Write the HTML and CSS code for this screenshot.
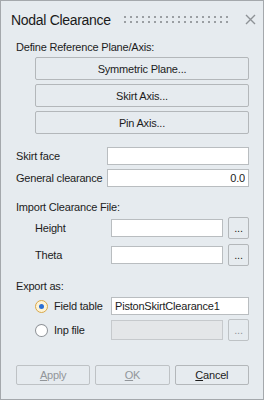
FILE: index.html
```html
<!DOCTYPE html>
<html>
<head>
  <title>Nodal Clearance</title>
  <link rel="stylesheet" href="styles.css">
</head>
<body>
  <div class="window">
    <div class="titlebar">
      <span class="title">Nodal Clearance</span>
      <svg class="grip" height="7">
        <defs>
          <pattern id="dots" width="6" height="5" patternUnits="userSpaceOnUse">
            <rect x="0" y="0" width="2" height="2" fill="#9a9ea2"></rect>
          </pattern>
        </defs>
        <rect width="100%" height="7" fill="url(#dots)"></rect>
      </svg>
      <svg class="close" width="11" height="11" viewBox="0 0 11 11">
        <path d="M1 1 L10 10 M10 1 L1 10" stroke="#8e9296" stroke-width="1.4" fill="none"></path>
      </svg>
    </div>

    <div class="content">
      <div class="section">Define Reference Plane/Axis:</div>
      <div class="btn-stack">
        <button class="btn">Symmetric Plane...</button>
        <button class="btn">Skirt Axis...</button>
        <button class="btn">Pin Axis...</button>
      </div>

      <div class="fields">
        <label class="field-label">Skirt face</label>
        <input class="text" type="text" value="">
        <label class="field-label">General clearance</label>
        <input class="text num" type="text" value="0.0">
      </div>

      <div class="section import-title">Import Clearance File:</div>
      <div class="file-rows">
        <div class="file-row">
          <span class="sub-label">Height</span>
          <input class="text" type="text" value="">
          <button class="btn dots">...</button>
        </div>
        <div class="file-row">
          <span class="sub-label">Theta</span>
          <input class="text" type="text" value="">
          <button class="btn dots">...</button>
        </div>
      </div>

      <div class="section export-title">Export as:</div>
      <div class="export-rows">
        <div class="export-row">
          <span class="radio checked"></span>
          <span class="radio-label">Field table</span>
          <input class="text wide" type="text" value="PistonSkirtClearance1">
        </div>
        <div class="export-row">
          <span class="radio"></span>
          <span class="radio-label">Inp file</span>
          <input class="text disabled" type="text" value="" disabled>
          <button class="btn dots off">...</button>
        </div>
      </div>

      <div class="footer">
        <button class="btn off"><u>A</u>pply</button>
        <button class="btn off"><u>O</u>K</button>
        <button class="btn"><u>C</u>ancel</button>
      </div>
    </div>
  </div>
</body>
</html>
```

FILE: styles.css
```css
body {
  margin: 0;
  font-family: "Liberation Sans", Arial, sans-serif;
  font-size: 11px;
  letter-spacing: -0.2px;
  color: #1c1c1c;
}
.window {
  width: 264px;
  height: 400px;
  box-sizing: border-box;
  border: 1px solid #a4a8ac;
  background: #e6ebef;
  display: flex;
  flex-direction: column;
}
.titlebar {
  height: 34px;
  display: flex;
  align-items: center;
  padding: 0 7px 0 10px;
}
.title {
  font-size: 14px;
  letter-spacing: -0.3px;
  color: #1a1a1a;
  margin-top: 3px;
}
.grip {
  flex: 1;
  margin: 3px 14px 0 13px;
}
.close {
  margin-top: 3px;
}
.content {
  flex: 1;
  display: flex;
  flex-direction: column;
  padding: 0 14px 14px 15px;
}
.section {
  line-height: 13px;
  margin-top: 6px;
}
button {
  font-family: inherit;
  font-size: 11px;
  letter-spacing: -0.2px;
  color: #1c1c1c;
}
.btn {
  background: #e6ebef;
  border: 1px solid #b3b7ba;
  border-radius: 2px;
  padding: 0;
}
.btn-stack {
  display: flex;
  flex-direction: column;
  gap: 4px;
  margin: 3px 0 0 19px;
}
.btn-stack .btn {
  height: 23px;
}
input.text {
  box-sizing: border-box;
  height: 18px;
  border: 1px solid #b9bdc0;
  background: #fff;
  font-family: inherit;
  font-size: 11px;
  letter-spacing: -0.2px;
  color: #1c1c1c;
  padding: 0 3px;
  outline: none;
  min-width: 0;
}
input.num {
  text-align: right;
}
.fields {
  display: grid;
  grid-template-columns: 91px 1fr;
  row-gap: 4px;
  align-items: center;
  margin-top: 13px;
}
.import-title {
  margin-top: 14px;
}
.file-rows {
  display: flex;
  flex-direction: column;
  gap: 5px;
  margin-top: 3px;
}
.file-row {
  display: flex;
  align-items: center;
  padding-left: 19px;
}
.sub-label {
  width: 76px;
}
.file-row input.text {
  width: 113px;
}
.btn.dots {
  width: 21px;
  height: 22px;
  margin-left: 5px;
  line-height: 14px;
}
.export-title {
  margin-top: 14px;
}
.export-rows {
  display: flex;
  flex-direction: column;
  gap: 4px;
  margin-top: 4px;
}
.export-row {
  display: flex;
  align-items: center;
  padding-left: 19px;
}
.radio {
  width: 11px;
  height: 11px;
  border: 1px solid #8d9196;
  border-radius: 50%;
  background: #fff;
  box-sizing: content-box;
  position: relative;
}
.radio.checked {
  border-color: #d9a84a;
  background: #fdf3d6;
}
.radio.checked::after {
  content: "";
  position: absolute;
  left: 3px;
  top: 3px;
  width: 5px;
  height: 5px;
  border-radius: 50%;
  background: #2a6fd6;
}
.radio-label {
  margin-left: 6px;
  width: 57px;
}
.export-row input.wide {
  width: 138px;
}
.export-row input.disabled {
  width: 113px;
  height: 20px;
  background: #e4e6e8;
  border-color: #c6c9cc;
}
.btn.off {
  color: #92969a;
  border-color: #bec2c5;
}
.footer {
  margin-top: auto;
  display: grid;
  grid-template-columns: repeat(3, 1fr);
  gap: 5px;
}
.footer .btn {
  height: 20px;
}
```
